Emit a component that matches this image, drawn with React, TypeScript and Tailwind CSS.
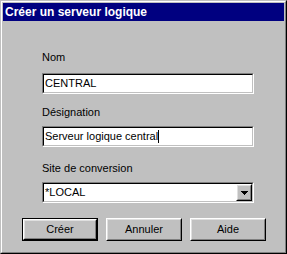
import React from 'react';

// Win95-style raised frame (outer + inner bevel)
function Raised({ children, className = '' }: { children: React.ReactNode; className?: string }) {
  return (
    <div className={`border border-t-white border-l-white border-r-black border-b-black ${className}`}>
      <div className="h-full w-full border border-t-[#dfdfdf] border-l-[#dfdfdf] border-r-[#808080] border-b-[#808080] flex items-center justify-center">
        {children}
      </div>
    </div>
  );
}

function Sunken({ children }: { children: React.ReactNode }) {
  return (
    <div className="h-[21px] w-[212px] border border-t-[#808080] border-l-[#808080] border-r-white border-b-white">
      <div className="h-full w-full border border-t-black border-l-black border-r-[#c0c0c0] border-b-[#c0c0c0] bg-white flex items-center">
        {children}
      </div>
    </div>
  );
}

function Button({ label, isDefault = false }: { label: string; isDefault?: boolean }) {
  if (isDefault) {
    return (
      <div className="h-[23px] w-[76px] border border-black">
        <Raised className="h-full w-full">
          <span className="text-[11px] leading-[13px] text-black">{label}</span>
        </Raised>
      </div>
    );
  }
  return (
    <Raised className="h-[23px] w-[76px]">
      <span className="text-[11px] leading-[13px] text-black">{label}</span>
    </Raised>
  );
}

export default function App() {
  return (
    <div
      className="w-[287px] h-[254px] bg-[#c0c0c0] border border-t-[#c0c0c0] border-l-[#c0c0c0] border-r-black border-b-black"
      style={{ fontFamily: '"Liberation Sans", Arial, sans-serif' }}
    >
      <div className="h-full w-full border border-t-white border-l-white border-r-[#808080] border-b-[#808080] p-px flex flex-col">
        {/* Title bar */}
        <div className="h-[18px] bg-[#000080] flex items-center pl-[2px]">
          <span className="text-[12px] leading-[14px] font-bold text-white">Créer un serveur logique</span>
        </div>

        {/* Client area */}
        <div className="flex-1 flex flex-col pl-[39px]">
          <span className="mt-[30px] text-[11px] leading-[13px] text-black">Nom</span>
          <div className="mt-[9px]">
            <Sunken>
              <span className="pl-[1px] text-[11px] leading-[13px] text-black">CENTRAL</span>
            </Sunken>
          </div>

          <span className="mt-[12px] text-[11px] leading-[13px] text-black">Désignation</span>
          <div className="mt-[7px]">
            <Sunken>
              <span className="pl-[1px] text-[11px] leading-[13px] text-black">Serveur logique central</span>
              <span className="w-px h-[13px] bg-black" />
            </Sunken>
          </div>

          <span className="mt-[15px] text-[11px] leading-[13px] text-black">Site de conversion</span>
          <div className="mt-[7px]">
            <Sunken>
              <span className="flex-1 pl-[1px] text-[11px] leading-[13px] text-black">*LOCAL</span>
              <Raised className="h-[17px] w-[16px] bg-[#c0c0c0]">
                <svg width="7" height="4" viewBox="0 0 7 4">
                  <path d="M0 0h7v1h-1v1h-1v1h-1v1h-1v-1h-1v-1h-1v-1h-1z" fill="black" />
                </svg>
              </Raised>
            </Sunken>
          </div>

          <div className="mt-[15px] -ml-[20px] flex gap-[8px]">
            <Button label="Créer" isDefault />
            <Button label="Annuler" />
            <Button label="Aide" />
          </div>
        </div>
      </div>
    </div>
  );
}
